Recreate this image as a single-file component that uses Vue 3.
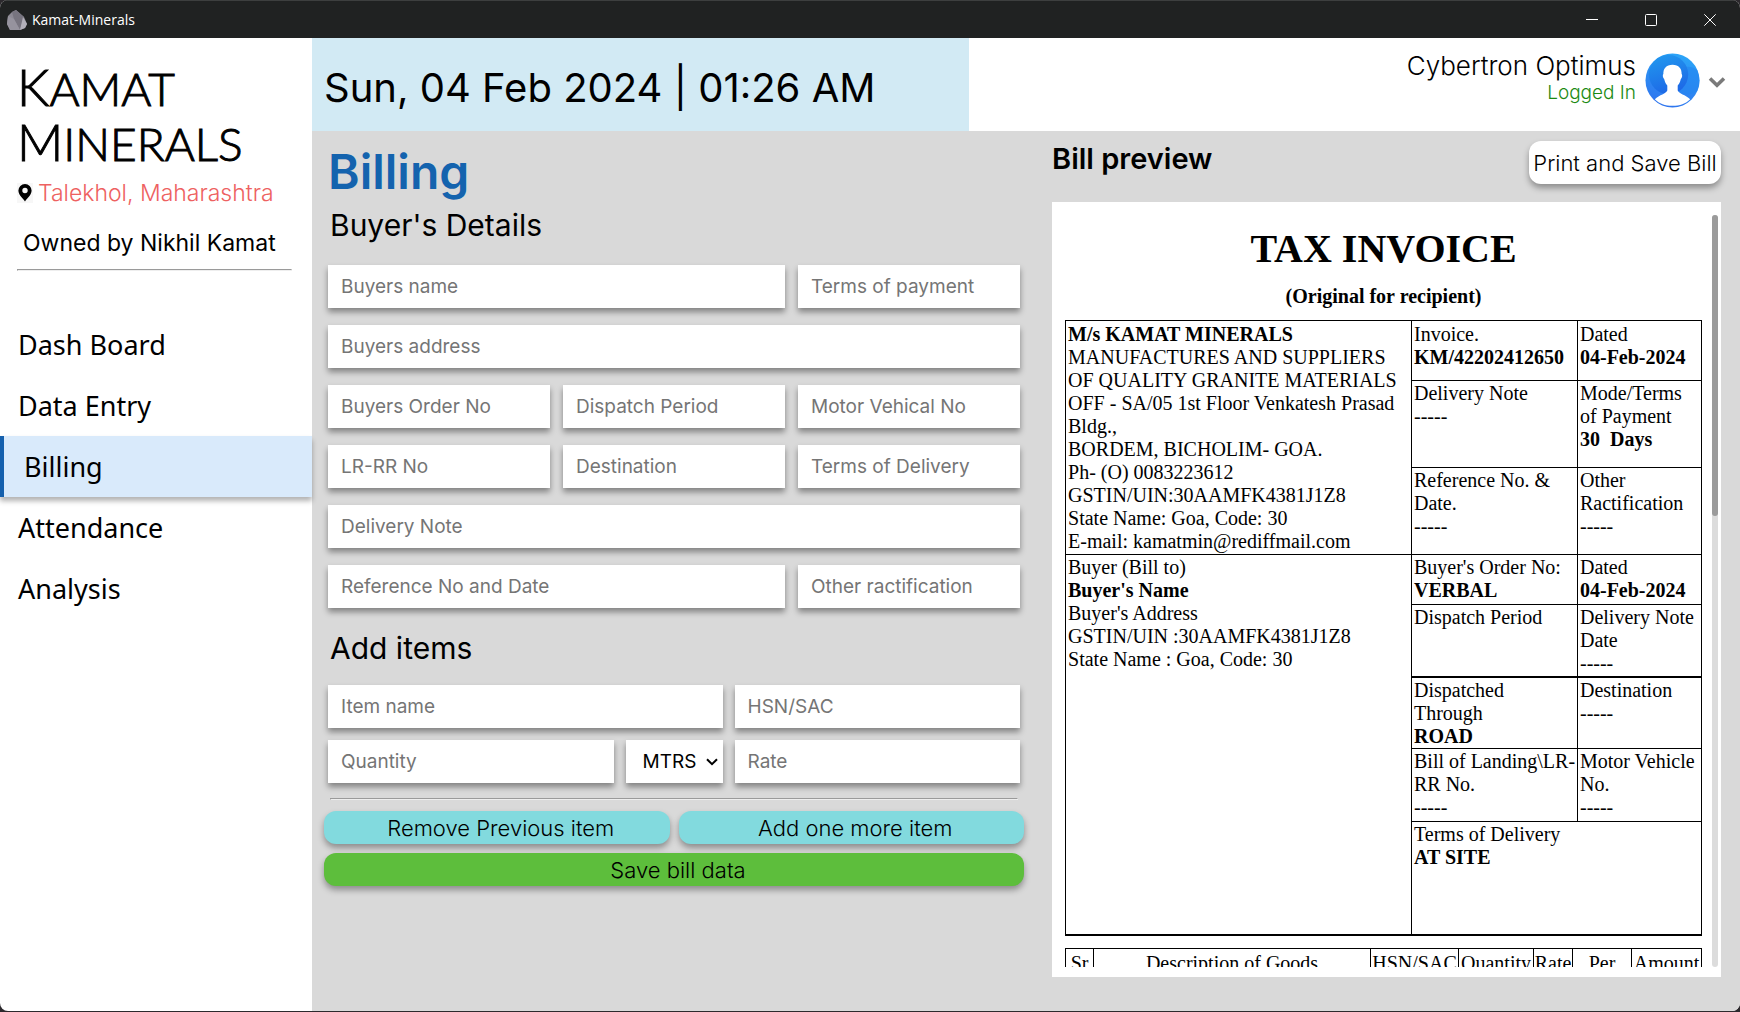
<script setup>
import { ref } from 'vue'

const navItems = ['Dash Board', 'Data Entry', 'Billing', 'Attendance', 'Analysis']
const active = ref('Billing')

const buyerFields = [
  { label: 'Buyers name', span: 2 },
  { label: 'Terms of payment', span: 1 },
  { label: 'Buyers address', span: 3 },
  { label: 'Buyers Order No', span: 1 },
  { label: 'Dispatch Period', span: 1 },
  { label: 'Motor Vehical No', span: 1 },
  { label: 'LR-RR No', span: 1 },
  { label: 'Destination', span: 1 },
  { label: 'Terms of Delivery', span: 1 },
  { label: 'Delivery Note', span: 3 },
  { label: 'Reference No and Date', span: 2 },
  { label: 'Other ractification', span: 1 }
]
const unit = ref('MTRS')
</script>

<template>
  <div class="window">
    <header class="titlebar">
      <svg class="rock" viewBox="0 0 20 20" aria-hidden="true">
        <path d="M5 2 9 0 17 7 20 14 18 18 13 20H3L0 14 1 6Z" fill="#8c8994" />
        <path d="M5 2 9 0 17 7 13 20 7 9Z" fill="#77747f" />
        <path d="M16 7 20 14 18 18 13 20Z" fill="#b3b0ba" />
        <path d="M1 6 7 9 13 20H3L0 14Z" fill="#96939e" />
      </svg>
      <span class="app-name">Kamat-Minerals</span>
      <div class="controls">
        <button type="button" aria-label="Minimize">
          <svg viewBox="0 0 12 12"><path d="M0 5.5H12" /></svg>
        </button>
        <button type="button" aria-label="Maximize">
          <svg viewBox="0 0 12 12"><rect x=".5" y=".5" width="11" height="11" rx="1" /></svg>
        </button>
        <button type="button" aria-label="Close">
          <svg viewBox="0 0 12 12"><path d="M.3.3 11.7 11.7M11.7.3.3 11.7" /></svg>
        </button>
      </div>
    </header>

    <div class="body">
      <aside class="sidebar">
        <div class="brand">
          <div class="logo"><div><b>K</b>AMAT</div><div><b>M</b>INERALS</div></div>
          <div class="place">
            <svg viewBox="0 0 16 20" aria-hidden="true">
              <path fill="#000" fill-rule="evenodd" d="M8 1a6.6 6.6 0 0 0-6.600 6.600C1.400 12 5.500 15 8 18.500 10.500 15 14.600 12 14.600 7.600A6.600 6.600 0 0 0 8 1Zm0 3.800a2.700 2.700 0 1 1 0 5.400 2.700 2.700 0 0 1 0-5.400Z" />
            </svg>
            <span>Talekhol, Maharashtra</span>
          </div>
          <p class="owner">Owned by Nikhil Kamat</p>
          <hr />
        </div>
        <nav>
          <a
            v-for="item in navItems"
            :key="item"
            href="#"
            :class="{ active: item === active }"
            @click.prevent="active = item"
          >{{ item }}</a>
        </nav>
      </aside>

      <div class="main">
        <div class="topbar">
          <div class="clock">Sun, 04 Feb 2024 | 01:26 AM</div>
          <div class="user">
            <div class="who">
              <span class="name">Cybertron Optimus</span>
              <span class="status">Logged In</span>
            </div>
            <svg class="avatar" viewBox="0 0 56 56" aria-hidden="true">
              <defs>
                <linearGradient id="sky" x1=".7" y1="0" x2=".4" y2="1">
                  <stop offset="0" stop-color="#2ba6f8" />
                  <stop offset="1" stop-color="#2f74ee" />
                </linearGradient>
                <linearGradient id="disc" x1=".3" y1="0" x2=".6" y2="1">
                  <stop offset="0" stop-color="#2196ee" />
                  <stop offset="1" stop-color="#1d66e6" />
                </linearGradient>
                <clipPath id="round"><circle cx="28" cy="28" r="27.500" /></clipPath>
              </defs>
              <g clip-path="url(#round)">
                <rect width="56" height="56" fill="url(#sky)" />
                <circle cx="44" cy="28" r="14" fill="#2485f0" opacity=".6" />
                <circle cx="24" cy="22" r="20" fill="url(#disc)" />
                <path fill="#fff" d="M28 12c6.500 0 9.500 4 9.300 9.500.9.700.8 3.600-.9 5.200-.7 3-1.700 5-3.100 6.300v5.200c1 3.300 8 4.300 12.700 8.800-4.500 4.500-10.500 6.800-18 6.800S14.500 51.500 10 47c4.700-4.500 11.700-5.500 12.700-8.800V33c-1.400-1.300-2.400-3.300-3.100-6.300-1.700-1.600-1.800-4.500-.9-5.200C18.500 16 21.500 12 28 12Z" />
              </g>
            </svg>
            <button class="more" type="button" aria-label="Account menu">
              <svg viewBox="0 0 18 12"><path d="M2 2.500 9 9.200 16 2.500" fill="none" stroke="#7a7a7a" stroke-width="3.600" /></svg>
            </button>
          </div>
        </div>

        <div class="content">
          <form class="billing" @submit.prevent>
            <h1>Billing</h1>
            <h2>Buyer's Details</h2>
            <div class="buyer-grid">
              <input
                v-for="f in buyerFields"
                :key="f.label"
                type="text"
                :class="'span-' + f.span"
                :placeholder="f.label"
                :aria-label="f.label"
              />
            </div>
            <h2 class="items-title">Add items</h2>
            <div class="item-grid">
              <input class="span-2" type="text" placeholder="Item name" aria-label="Item name" />
              <input type="text" placeholder="HSN/SAC" aria-label="HSN/SAC" />
              <input type="text" placeholder="Quantity" aria-label="Quantity" />
              <div class="unit">
                <select v-model="unit" aria-label="Unit">
                  <option>MTRS</option>
                </select>
                <svg viewBox="0 0 12 8" aria-hidden="true"><path d="M1 1.200 6 6.200 11 1.200" fill="none" stroke="#000" stroke-width="2" /></svg>
              </div>
              <input type="text" placeholder="Rate" aria-label="Rate" />
            </div>
            <hr />
            <div class="actions">
              <button type="button">Remove Previous item</button>
              <button type="button">Add one more item</button>
              <button class="save" type="submit">Save bill data</button>
            </div>
          </form>

          <section class="preview">
            <div class="preview-head">
              <h2>Bill preview</h2>
              <button type="button">Print and Save Bill</button>
            </div>
            <div class="paper">
              <div class="sheet">
                <h3>TAX INVOICE</h3>
                <p class="copy">(Original for recipient)</p>
                <table class="invoice">
                  <colgroup><col class="c1" /><col class="c2" /><col class="c3" /></colgroup>
                  <tbody>
                    <tr class="h60">
                      <td rowspan="3">
                        <b>M/s KAMAT MINERALS</b><br />MANUFACTURES AND SUPPLIERS<br />OF QUALITY GRANITE MATERIALS<br />OFF - SA/05 1st Floor Venkatesh Prasad Bldg.,<br />BORDEM, BICHOLIM- GOA.<br />Ph- (O) 0083223612<br />GSTIN/UIN:30AAMFK4381J1Z8<br />State Name: Goa, Code: 30<br />E-mail: kamatmin@rediffmail.com
                      </td>
                      <td>Invoice.<br /><b>KM/42202412650</b></td>
                      <td>Dated<br /><b>04-Feb-2024</b></td>
                    </tr>
                    <tr class="h87">
                      <td>Delivery Note<br />-----</td>
                      <td>Mode/Terms of Payment<br /><b>30&nbsp; Days</b></td>
                    </tr>
                    <tr class="h87">
                      <td>Reference No. &amp; Date.<br />-----</td>
                      <td>Other Ractification<br />-----</td>
                    </tr>
                    <tr class="h50">
                      <td rowspan="5">Buyer (Bill to)<br /><b>Buyer's Name</b><br />Buyer's Address<br />GSTIN/UIN :30AAMFK4381J1Z8<br />State Name : Goa, Code: 30</td>
                      <td>Buyer's Order No:<br /><b>VERBAL</b></td>
                      <td>Dated<br /><b>04-Feb-2024</b></td>
                    </tr>
                    <tr class="h72 thick">
                      <td>Dispatch Period</td>
                      <td>Delivery Note Date<br />-----</td>
                    </tr>
                    <tr class="h72">
                      <td>Dispatched Through<br /><b>ROAD</b></td>
                      <td>Destination<br />-----</td>
                    </tr>
                    <tr class="h73">
                      <td class="keep">Bill of Landing\LR-<br />RR No.<br />-----</td>
                      <td>Motor Vehicle No.<br />-----</td>
                    </tr>
                    <tr class="h113">
                      <td colspan="2">Terms of Delivery<br /><b>AT SITE</b></td>
                    </tr>
                  </tbody>
                </table>
                <table class="goods">
                  <colgroup>
                    <col class="g1" /><col /><col class="g3" /><col class="g4" /><col class="g5" /><col class="g6" /><col class="g7" />
                  </colgroup>
                  <thead>
                    <tr>
                      <th>Sr No</th><th>Description of Goods</th><th>HSN/SAC</th><th>Quantity</th><th>Rate</th><th>Per</th><th>Amount</th>
                    </tr>
                  </thead>
                </table>
              </div>
              <div class="track" aria-hidden="true"><div class="thumb"></div></div>
            </div>
          </section>
        </div>
      </div>
    </div>
  </div>
</template>

<style>
body {
  margin: 0;
  background: #2c292d;
}
</style>

<style scoped>
* {
  box-sizing: border-box;
}
h1, h2, h3, p {
  margin: 0;
}
.window {
  height: calc(100vh - 1px);
  min-height: 900px;
  display: flex;
  flex-direction: column;
  overflow: hidden;
  border-radius: 8px;
  background: #fff;
  color: #000;
  font-family: Inter, "Liberation Sans", sans-serif;
}
button, input, select {
  font-family: inherit;
  color: #000;
  border: 0;
  margin: 0;
}
hr {
  margin: 0;
  border: 1px inset #eee;
}

/* title bar */
.titlebar {
  height: 38px;
  flex: none;
  display: flex;
  align-items: center;
  padding: 0 1px 0 7px;
  gap: 5px;
  background: #202222;
  border-top: 1px solid #3d3f3f;
  color: #fff;
}
.rock {
  width: 20px;
  height: 20px;
}
.app-name {
  font: 14px/20px "Open Sans", "Noto Sans", sans-serif;
}
.controls {
  margin-left: auto;
  display: flex;
}
.controls button {
  width: 59px;
  height: 37px;
  padding: 0;
  display: grid;
  place-items: center;
  background: none;
}
.controls svg {
  width: 12px;
  height: 12px;
  fill: none;
  stroke: #fff;
  stroke-width: 1;
}

.body {
  flex: 1;
  min-height: 0;
  display: flex;
}

/* sidebar */
.sidebar {
  width: 312px;
  flex: none;
}
.brand {
  height: 276px;
  padding: 23px 20px 0 17px;
}
.logo {
  font: 300 46px/55px Lato, sans-serif;
  -webkit-text-stroke: 1px #000;
}
.logo div {
  height: 55px;
}
.logo b {
  font-size: 51px;
  line-height: 1px;
  font-weight: 300;
}
.place {
  display: flex;
  align-items: center;
  gap: 5px;
  margin-top: 6px;
  color: #ee6161;
  font-size: 23px;
  line-height: 32px;
  font-weight: 300;
}
.place svg {
  width: 16px;
  height: 20px;
  background: #f7f7f7;
}
.owner {
  margin: 18px 0 10px 6px;
  font-size: 23px;
  line-height: 32px;
}
nav {
  display: flex;
  flex-direction: column;
}
nav a {
  height: 61px;
  padding-left: 18px;
  font: 27px/61px "Noto Sans", sans-serif;
  color: #000;
  text-decoration: none;
}
nav a.active {
  position: relative;
  padding-left: 20px;
  border-left: 4px solid #1560ad;
  background: #d9eafb;
  box-shadow: 0 4px 5px rgba(0, 0, 0, 0.3);
}

/* top bar */
.main {
  flex: 1;
  min-width: 0;
  display: flex;
  flex-direction: column;
}
.topbar {
  height: 93px;
  flex: none;
  display: flex;
  justify-content: space-between;
}
.clock {
  width: 46%;
  padding-left: 12px;
  background: #d2eaf4;
  font-size: 40px;
  line-height: 100px;
  white-space: nowrap;
}
.user {
  display: flex;
  align-items: flex-start;
  padding: 15px 14px 0 0;
}
.who {
  display: flex;
  flex-direction: column;
  align-items: flex-end;
  margin: -2px 9px 0 0;
}
.name {
  font-size: 26px;
  line-height: 30px;
  font-weight: 300;
}
.status {
  font-size: 19px;
  line-height: 23px;
  font-weight: 300;
  color: #1c8a12;
}
.avatar {
  width: 55px;
  height: 55px;
}
.more {
  width: 18px;
  height: 12px;
  padding: 0;
  margin: 23px 0 0 8px;
  background: none;
}
.more svg {
  display: block;
}

/* content */
.content {
  flex: 1;
  min-height: 0;
  display: grid;
  grid-template-columns: minmax(0, 30fr) minmax(0, 29fr);
  column-gap: 32px;
  padding: 8px 19px 34px 16px;
  background: #d9d9d9;
}
h1 {
  font-size: 48px;
  line-height: 66px;
  font-weight: 600;
  color: #1463ae;
}
h2 {
  margin-left: 2px;
  font-size: 30px;
  line-height: 40px;
  font-weight: 400;
}
.items-title {
  margin-top: 20px;
}
.buyer-grid {
  margin-top: 20px;
  display: grid;
  grid-template-columns: repeat(3, minmax(0, 1fr));
  gap: 17px 13px;
}
.item-grid {
  margin-top: 17px;
  display: grid;
  grid-template-columns: minmax(0, 1fr) 97px minmax(0, 1fr);
  gap: 12px;
}
.span-2 {
  grid-column: span 2;
}
.span-3 {
  grid-column: span 3;
}
.billing input,
.unit {
  width: 100%;
  height: 43px;
  background: #fff;
  box-shadow: 0 4px 6px rgba(0, 0, 0, 0.4);
}
.billing input {
  padding: 0 13px 1px;
  font-size: 19px;
  border-radius: 0;
}
.billing input::placeholder {
  color: #757575;
  opacity: 1;
}
.unit {
  display: grid;
  align-items: center;
}
.unit select,
.unit svg {
  grid-area: 1 / 1;
}
.unit select {
  width: 100%;
  height: 43px;
  padding: 0 0 0 17px;
  appearance: none;
  background: none;
  font-size: 19px;
}
.unit svg {
  width: 12px;
  height: 8px;
  justify-self: end;
  margin-right: 5px;
  pointer-events: none;
}
.billing hr {
  margin: 15px 2px 11px;
}
.actions {
  margin: 0 -4px;
  display: grid;
  grid-template-columns: repeat(2, minmax(0, 1fr));
  gap: 9px;
}
.actions button,
.preview-head button {
  height: 33px;
  padding: 0;
  border-radius: 12px;
  background: #82dade;
  box-shadow: 0 4px 6px rgba(0, 0, 0, 0.35);
  font-size: 22px;
  font-weight: 300;
}
.actions button {
  padding-left: 8px;
}
.actions .save {
  grid-column: span 2;
  background: #5dbe3c;
}

/* bill preview */
.preview {
  display: flex;
  flex-direction: column;
  min-height: 0;
}
.preview-head {
  height: 63px;
  flex: none;
  display: flex;
  justify-content: space-between;
  align-items: flex-start;
}
.preview-head h2 {
  margin-left: 0;
  font-size: 29px;
  font-weight: 600;
}
.preview-head button {
  height: 43px;
  width: 192px;
  margin-top: 2px;
  background: #fff;
  white-space: nowrap;
}
.paper {
  flex: 1;
  min-height: 0;
  display: flex;
  padding: 13px 3px 10px 13px;
  background: #fff;
  font: 20px/23px "Liberation Serif", serif;
}
.sheet {
  flex: 1;
  min-width: 0;
  padding-right: 10px;
  overflow: hidden;
}
h3 {
  margin-top: 11px;
  text-align: center;
  font-size: 40px;
  line-height: 46px;
}
.copy {
  margin: 13px 0 12px;
  text-align: center;
  font-weight: 700;
}
table {
  width: 100%;
  table-layout: fixed;
  border-collapse: collapse;
}
.c1 { width: 54.400%; }
.c2 { width: 26.100%; }
td, th {
  border: 1px solid #000;
  padding: 1px 1px 0 2px;
  vertical-align: top;
  text-align: left;
  font-weight: 400;
}
.h60 td {
  padding-top: 2px;
}
.keep {
  white-space: nowrap;
}
.h50 { height: 50px; }
.h60 { height: 60px; }
.h72 { height: 72px; }
.h73 { height: 73px; }
.h87 { height: 87px; }
.h113 { height: 113px; }
.thick td {
  border-bottom-width: 2px;
}
.invoice {
  border-bottom: 2px solid #000;
}
.goods {
  margin-top: 12px;
}
.goods th {
  padding: 3px 0;
  text-align: center;
}
.g1 { width: 28px; }
.g3 { width: 88px; }
.g4 { width: 75px; }
.g5 { width: 39px; }
.g6 { width: 59px; }
.g7 { width: 70px; }
.track {
  width: 6px;
  flex: none;
  border-radius: 3px;
  background: #dcdcdc;
}
.thumb {
  height: 40%;
  border-radius: 3px;
  background: #9b9b9b;
}
</style>
